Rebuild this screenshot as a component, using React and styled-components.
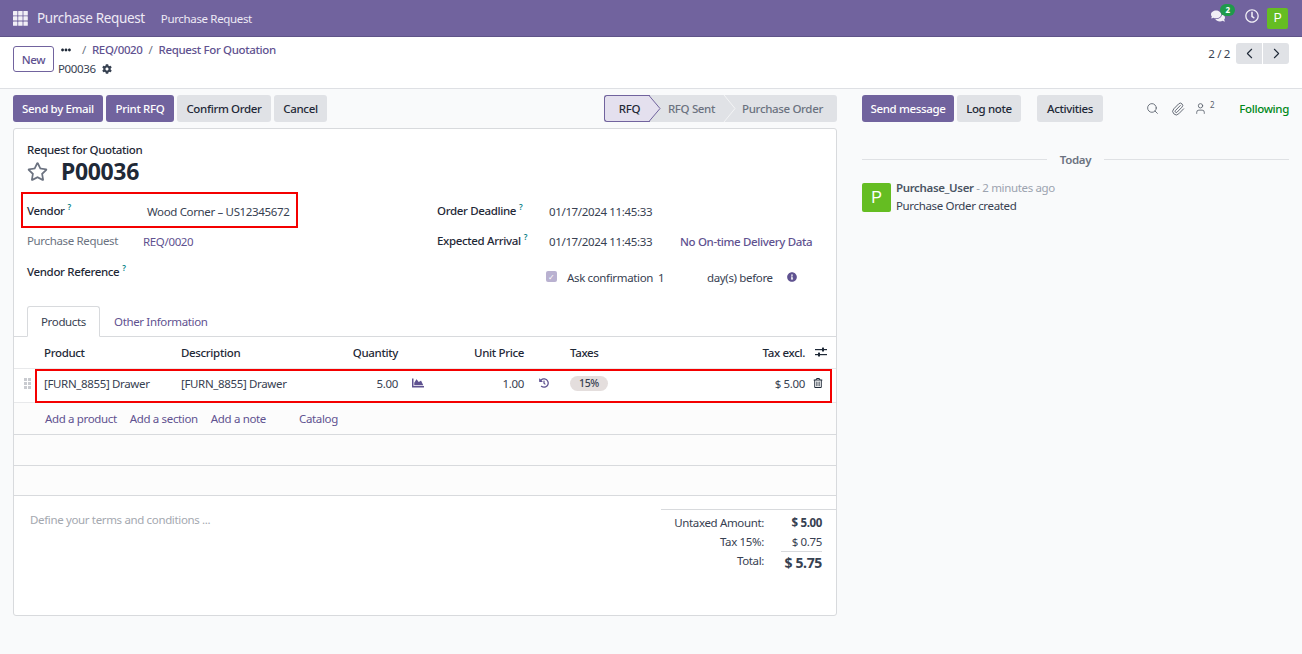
import React from "react";
import styled, { createGlobalStyle } from "styled-components";
import {
  FaChartArea,
  FaCog,
  FaComments,
  FaEllipsisH,
  FaHistory,
  FaInfoCircle,
  FaRegClock,
  FaRegStar,
  FaRegTrashAlt,
} from "react-icons/fa";
import { ChevronLeft, ChevronRight, Paperclip, Search, User } from "lucide-react";

const PURPLE = "#71639e";
const LINK = "#5f5290";
const TEXT = "#374151";
const DARK = "#1f2937";
const GREY = "#e0e2e6";
const LINE = "#d8dadd";

const GlobalStyle = createGlobalStyle`
  html, body {
    margin: 0;
    padding: 0;
    height: 100%;
    background: #f9fafb;
    overflow: hidden;
  }
  body {
    font-family: "Noto Sans", "Open Sans", sans-serif;
    font-size: 11.5px;
    letter-spacing: -0.35px;
    color: ${TEXT};
  }
  button { letter-spacing: inherit; }
  * { box-sizing: border-box; }
`;

const NavBar = styled.div`
  height: 37px;
  background: ${PURPLE};
  border-bottom: 1px solid #5f5488;
  display: flex;
  align-items: center;
  padding: 0 14px 0 13px;
  color: #fff;
`;

const AppsIcon = styled.svg`
  width: 15px;
  height: 15px;
  fill: #f1eff6;
  margin-right: 9px;
`;

const BrandName = styled.span`
  font-size: 13.5px;
  color: #eeeaf5;
  margin-right: 16px;
`;

const NavItem = styled.span`
  font-size: 11.5px;
  color: #eeeaf5;
`;

const NavRight = styled.div`
  margin-left: auto;
  display: flex;
  align-items: center;
`;

const NavIcon = styled.span`
  position: relative;
  display: flex;
  font-size: 14px;
  color: #f1eff6;
  margin: 0 ${(p) => p.$gap}px 4px 0;
`;

const CountBadge = styled.span`
  position: absolute;
  top: -5px;
  left: 9px;
  height: 12px;
  min-width: 15px;
  border-radius: 6px;
  background: #1f9a4b;
  color: #fff;
  font-size: 8px;
  font-weight: 700;
  line-height: 12px;
  text-align: center;
`;

const Avatar = styled.span`
  width: ${(p) => p.$size}px;
  height: ${(p) => p.$size}px;
  flex: none;
  background: #65bd22;
  color: #fff;
  border-radius: 2px;
  display: flex;
  align-items: center;
  justify-content: center;
  font-family: "Liberation Sans", sans-serif;
  font-size: ${(p) => p.$font}px;
`;

const ControlPanel = styled.div`
  height: 52px;
  background: #fff;
  border-bottom: 1px solid #dee0e4;
  display: flex;
  padding: 5px 13px 0;
`;

const NewButton = styled.button`
  width: 41px;
  height: 26px;
  margin-top: 4px;
  background: #fff;
  border: 1px solid ${PURPLE};
  border-radius: 3px;
  color: ${LINK};
  font: 500 11.5px "Noto Sans", sans-serif;
  padding: 0;
`;

const Crumbs = styled.div`
  margin-left: 4px;
  display: flex;
  flex-direction: column;
  gap: 4px;
`;

const CrumbRow = styled.div`
  height: 15px;
  display: flex;
  align-items: center;
  gap: 6px;
  font-size: 11.5px;
  font-weight: 500;
  color: ${LINK};
`;

const Dots = styled.span`
  display: flex;
  font-size: 10px;
  color: ${DARK};
  margin: 0 5px 0 3px;
`;

const Slash = styled.span`
  color: #6b7280;
  font-weight: 400;
`;

const RecordRow = styled.div`
  height: 15px;
  display: flex;
  align-items: center;
  gap: 6px;
  font-size: 11.5px;
  color: ${TEXT};

  svg {
    font-size: 10px;
    color: #374151;
    letter-spacing: 0;
  }
`;

const Pager = styled.div`
  margin-left: auto;
  display: flex;
  align-items: center;
  align-self: flex-start;
  gap: 6px;
  font-size: 11.5px;
  margin-top: 1px;
`;

const PagerButtons = styled.div`
  display: flex;
  gap: 1px;
`;

const PagerButton = styled.span`
  width: 26px;
  height: 21px;
  background: ${GREY};
  display: flex;
  align-items: center;
  justify-content: center;
  color: ${DARK};
  border-radius: ${(p) => (p.$left ? "3px 0 0 3px" : "0 3px 3px 0")};
`;

const Columns = styled.div`
  display: grid;
  grid-template-columns: 850px 1fr;
`;

const FormColumn = styled.div`
  padding: 6px 13px 0;
`;

const ActionBar = styled.div`
  display: flex;
  justify-content: space-between;
  margin-bottom: 6px;
`;

const ButtonRow = styled.div`
  display: flex;
  gap: 3px;
`;

const Button = styled.button`
  height: 27px;
  width: ${(p) => p.$width}px;
  padding: 0;
  border: 0;
  border-radius: 3px;
  background: ${(p) => (p.$primary ? PURPLE : GREY)};
  color: ${(p) => (p.$primary ? "#fff" : DARK)};
  font: 500 11.5px "Noto Sans", sans-serif;
  white-space: nowrap;
  margin-left: ${(p) => p.$offset || 0}px;
`;

const StatusBar = styled.div`
  display: flex;
  height: 27px;
  width: 233px;
  background: ${GREY};
  border-radius: 3px;
  position: relative;
`;

const Stage = styled.span`
  width: ${(p) => p.$width}px;
  display: flex;
  align-items: center;
  justify-content: center;
  font-weight: 500;
  color: #6b7280;
  font-size: 11.5px;
`;

const ActiveStage = styled(Stage)`
  color: ${DARK};
  background: #e4e0ee;
  border: 1px solid ${PURPLE};
  border-right: 0;
  border-radius: 3px 0 0 3px;
  padding-left: 4px;
`;

const StageArrow = styled.svg`
  position: absolute;
  top: 0;
  left: ${(p) => p.$left}px;
  width: 12px;
  height: 27px;
  overflow: visible;
`;

const Sheet = styled.div`
  height: 488px;
  background: #fff;
  border: 1px solid #d8dadd;
  border-radius: 3px;
  display: flex;
  flex-direction: column;
`;

const SheetHead = styled.div`
  padding: 13px 13px 0;
`;

const SubTitle = styled.div`
  font-size: 11.5px;
  font-weight: 500;
  color: ${DARK};
  line-height: 15px;
`;

const TitleRow = styled.div`
  display: flex;
  align-items: center;
  gap: 13px;
  height: 29px;
`;

const Star = styled(FaRegStar)`
  font-size: 21px;
  color: #6b7280;
`;

const Title = styled.h1`
  margin: 0;
  font-size: 23px;
  font-weight: 700;
  color: ${DARK};
  line-height: 29px;
`;

const FieldGrid = styled.div`
  display: grid;
  grid-template-columns: 410px 1fr;
  margin-top: 10px;
`;

const FieldColumn = styled.div`
  display: flex;
  flex-direction: column;
`;

const Field = styled.div`
  position: relative;
  height: ${(p) => p.$height || 30.5}px;
  display: flex;
  align-items: center;
  padding-top: ${(p) => p.$top || 0}px;
`;

const Label = styled.span`
  width: ${(p) => p.$width}px;
  flex: none;
  font-weight: ${(p) => (p.$muted ? 400 : 500)};
  color: ${(p) => (p.$muted ? "#6b7280" : DARK)};
  white-space: nowrap;
  margin-top: -2px;

  sup {
    font-size: 8px;
    color: #017e84;
    font-weight: 600;
    margin-left: 3px;
    line-height: 0;
  }
`;

const Value = styled.span`
  white-space: nowrap;
  flex: none;
  width: ${(p) => (p.$width ? `${p.$width}px` : "auto")};
  margin-left: ${(p) => p.$offset || 0}px;
`;

const LinkValue = styled(Value)`
  color: ${LINK};
  font-weight: ${(p) => (p.$strong ? 500 : 400)};
`;

const RedBox = styled.span`
  position: absolute;
  top: ${(p) => p.$top}px;
  bottom: ${(p) => p.$bottom}px;
  left: ${(p) => p.$left}px;
  right: ${(p) => (p.$right === undefined ? "auto" : `${p.$right}px`)};
  width: ${(p) => (p.$width ? `${p.$width}px` : "auto")};
  border: 2px solid #f40000;
  pointer-events: none;
`;

const CheckBox = styled.span`
  width: 11px;
  height: 11px;
  flex: none;
  border-radius: 2px;
  background: #b9b1d0;
  color: #fff;
  font-size: 8px;
  line-height: 11px;
  text-align: center;
  margin-left: 109px;
  margin-top: -2px;
`;

const InfoIcon = styled(FaInfoCircle)`
  font-size: 10px;
  color: ${LINK};
`;

const Tabs = styled.div`
  display: flex;
  margin-top: 18px;
  height: 31px;
  border-bottom: 1px solid ${LINE};
  padding-left: 13px;
`;

const Tab = styled.span`
  height: 31px;
  padding: 0 13px;
  display: flex;
  align-items: center;
  color: ${(p) => (p.$active ? TEXT : LINK)};
  background: ${(p) => (p.$active ? "#fff" : "transparent")};
  border: 1px solid ${(p) => (p.$active ? LINE : "transparent")};
  border-bottom-color: ${(p) => (p.$active ? "#fff" : "transparent")};
  border-radius: 3px 3px 0 0;
`;

const Table = styled.div`
  display: flex;
  flex-direction: column;
`;

const GRID = "30px 137px 150px 67px 30px 96px 46px 60px 175px 31px";

const HeadRow = styled.div`
  height: 32px;
  display: grid;
  grid-template-columns: ${GRID};
  align-items: center;
  font-weight: 500;
  color: ${DARK};
  border-bottom: 1px solid #e8e9eb;
`;

const ItemRow = styled(HeadRow)`
  height: 34px;
  padding-bottom: 4px;
  font-weight: 400;
  color: ${TEXT};
  position: relative;
`;

const Cell = styled.span`
  white-space: nowrap;
  text-align: ${(p) => (p.$right ? "right" : "left")};
  grid-column: ${(p) => p.$col};
`;

const IconCell = styled.span`
  grid-column: ${(p) => p.$col};
  display: flex;
  padding-left: ${(p) => p.$pad || 0}px;
  font-size: ${(p) => p.$size || 11}px;
  color: ${(p) => p.$color || LINK};
`;

const Grip = styled.svg`
  width: 7px;
  height: 11px;
  fill: #c9cbd0;
  margin-left: 10px;
`;

const SettingsIcon = styled.svg`
  width: 12px;
  height: 10px;
  fill: ${DARK};
`;

const TaxPill = styled.span`
  grid-column: 8;
  justify-self: start;
  width: 38px;
  height: 15px;
  border-radius: 8px;
  background: #e4dedd;
  color: #374151;
  font-size: 10.5px;
  font-weight: 500;
  line-height: 15px;
  text-align: center;
`;

const AddRow = styled.div`
  height: 32px;
  padding-left: 31px;
  display: flex;
  align-items: center;
  gap: 13px;
  color: ${LINK};
  background: #fcfcfc;
  border-bottom: 1px solid ${LINE};
`;

const Catalog = styled.span`
  margin-left: 20px;
`;

const BlankRow = styled.div`
  height: ${(p) => p.$height}px;
  border-bottom: 1px solid ${LINE};
  background: #fcfcfc;
`;

const Footer = styled.div`
  flex: 1;
  display: flex;
  justify-content: space-between;
  padding: 13px 0 0 16px;
`;

const Terms = styled.span`
  color: #a4a8af;
  margin-top: 3px;
`;

const Totals = styled.div`
  width: 175px;
  border-top: 1px solid ${LINE};
  padding: 3px 14px 0 0;
  display: grid;
  grid-template-columns: 103px 1fr;
  height: fit-content;
`;

const TotalLabel = styled.span`
  text-align: right;
  line-height: 19px;
  height: ${(p) => (p.$tall ? 22 : 19)}px;
`;

const TotalValue = styled.span`
  text-align: right;
  line-height: ${(p) => (p.$big ? 22 : 19)}px;
  font-size: ${(p) => (p.$big ? 14 : 11.5)}px;
  font-weight: ${(p) => (p.$bold ? 700 : 400)};
  border-top: ${(p) => (p.$big ? `1px solid ${LINE}` : "0")};
  margin-left: 17px;
`;

const Chatter = styled.div`
  padding: 6px 13px 0 12px;
`;

const ChatterBar = styled.div`
  display: flex;
  align-items: center;
  height: 27px;
`;

const ChatterTools = styled.div`
  margin-left: auto;
  display: flex;
  align-items: center;
  color: #4b5563;
  font-size: 11.5px;
`;

const ToolIcon = styled.span`
  display: flex;
  align-items: center;
  margin-right: ${(p) => p.$gap}px;
  color: #59606c;

  sup {
    font-size: 8px;
    line-height: 8px;
    margin: -7px 0 0 3px;
  }
`;

const Following = styled.span`
  color: #008818;
  font-weight: 500;
`;

const DateLine = styled.div`
  display: flex;
  align-items: center;
  gap: 13px;
  margin-top: 30px;
  font-weight: 600;
  color: #6b7280;

  &::before, &::after {
    content: "";
    flex: 1;
    height: 1px;
    background: #dfe1e4;
  }
`;

const Message = styled.div`
  display: flex;
  gap: 5px;
  margin-top: 16px;
`;

const MessageBody = styled.div`
  display: flex;
  flex-direction: column;
  gap: 3px;
  line-height: 15px;
  margin-top: -3px;
`;

const Author = styled.div`
  color: #9ca3af;
  font-size: 11.5px;

  b {
    color: #4b5563;
    font-weight: 600;
  }
`;

const App = () => {
  return (
    <>
      <GlobalStyle />
      <NavBar>
        <AppsIcon viewBox="0 0 15 15">
          {[0, 5.2, 10.4].flatMap((y) =>
            [0, 5.2, 10.4].map((x) => <rect key={x + "-" + y} x={x} y={y} width="4.4" height="4.4" rx="0.5" />)
          )}
        </AppsIcon>
        <BrandName>Purchase Request</BrandName>
        <NavItem>Purchase Request</NavItem>
        <NavRight>
          <NavIcon $gap={20}>
            <FaComments />
            <CountBadge>2</CountBadge>
          </NavIcon>
          <NavIcon $gap={8}>
            <FaRegClock />
          </NavIcon>
          <Avatar $size={21} $font={12}>P</Avatar>
        </NavRight>
      </NavBar>

      <ControlPanel>
        <NewButton>New</NewButton>
        <Crumbs>
          <CrumbRow>
            <Dots><FaEllipsisH /></Dots>
            <Slash>/</Slash>
            <span>REQ/0020</span>
            <Slash>/</Slash>
            <span>Request For Quotation</span>
          </CrumbRow>
          <RecordRow>
            P00036 <FaCog />
          </RecordRow>
        </Crumbs>
        <Pager>
          2 / 2
          <PagerButtons>
            <PagerButton $left><ChevronLeft size={17} strokeWidth={1.5} /></PagerButton>
            <PagerButton><ChevronRight size={17} strokeWidth={1.5} /></PagerButton>
          </PagerButtons>
        </Pager>
      </ControlPanel>

      <Columns>
        <FormColumn>
          <ActionBar>
            <ButtonRow>
              <Button $primary $width={90}>Send by Email</Button>
              <Button $primary $width={68}>Print RFQ</Button>
              <Button $width={94}>Confirm Order</Button>
              <Button $width={53}>Cancel</Button>
            </ButtonRow>
            <StatusBar>
              <ActiveStage $width={46}>RFQ</ActiveStage>
              <Stage $width={83}>RFQ Sent</Stage>
              <Stage $width={99}>Purchase Order</Stage>
              <StageArrow $left={45} viewBox="0 0 12 27">
                <path d="M0 0.5 L11 13.5 L0 26.5" fill="#e4e0ee" stroke={PURPLE} />
              </StageArrow>
              <StageArrow $left={119} viewBox="0 0 12 27">
                <path d="M1 0 L12 13.5 L1 27" fill="none" stroke="#f4f5f6" />
              </StageArrow>
            </StatusBar>
          </ActionBar>

          <Sheet>
            <SheetHead>
              <SubTitle>Request for Quotation</SubTitle>
              <TitleRow>
                <Star />
                <Title>P00036</Title>
              </TitleRow>
              <FieldGrid>
                <FieldColumn>
                  <Field>
                    <RedBox $top={-4} $bottom={-1} $left={-6} $width={277} />
                    <Label $width={120}>Vendor<sup>?</sup></Label>
                    <Value>Wood Corner – US12345672</Value>
                  </Field>
                  <Field>
                    <Label $width={116} $muted>Purchase Request</Label>
                    <LinkValue>REQ/0020</LinkValue>
                  </Field>
                  <Field>
                    <Label $width={120}>Vendor Reference<sup>?</sup></Label>
                  </Field>
                </FieldColumn>
                <FieldColumn>
                  <Field>
                    <Label $width={112}>Order Deadline<sup>?</sup></Label>
                    <Value>01/17/2024 11:45:33</Value>
                  </Field>
                  <Field>
                    <Label $width={112}>Expected Arrival<sup>?</sup></Label>
                    <Value $width={131}>01/17/2024 11:45:33</Value>
                    <LinkValue $strong>No On-time Delivery Data</LinkValue>
                  </Field>
                  <Field $top={10}>
                    <CheckBox>✓</CheckBox>
                    <Value $offset={10} $width={91}>Ask confirmation</Value>
                    <Value $width={49}>1</Value>
                    <Value $width={80}>day(s) before</Value>
                    <InfoIcon />
                  </Field>
                </FieldColumn>
              </FieldGrid>
            </SheetHead>

            <Tabs>
              <Tab $active>Products</Tab>
              <Tab>Other Information</Tab>
            </Tabs>

            <Table>
              <HeadRow>
                <Cell $col="2">Product</Cell>
                <Cell $col="3">Description</Cell>
                <Cell $col="4" $right>Quantity</Cell>
                <Cell $col="6" $right>Unit Price</Cell>
                <Cell $col="8">Taxes</Cell>
                <Cell $col="9" $right>Tax excl.</Cell>
                <IconCell $col="10" $pad={10}>
                  <SettingsIcon viewBox="0 0 12 10">
                    <rect x="0" y="2" width="12" height="1.2" />
                    <rect x="0" y="7" width="12" height="1.2" />
                    <rect x="7" y="0.5" width="2" height="4" rx="0.5" />
                    <rect x="3" y="5.5" width="2" height="4" rx="0.5" />
                  </SettingsIcon>
                </IconCell>
              </HeadRow>
              <ItemRow>
                <RedBox $top={0} $bottom={-1} $left={21} $right={4} />
                <Grip viewBox="0 0 7 11">
                  {[0, 4, 8].flatMap((y) =>
                    [0, 4].map((x) => <rect key={x + "-" + y} x={x} y={y} width="3" height="3" />)
                  )}
                </Grip>
                <Cell $col="2">[FURN_8855] Drawer</Cell>
                <Cell $col="3">[FURN_8855] Drawer</Cell>
                <Cell $col="4" $right>5.00</Cell>
                <IconCell $col="5" $pad={14} $size={12}><FaChartArea /></IconCell>
                <Cell $col="6" $right>1.00</Cell>
                <IconCell $col="7" $pad={15} $size={10}><FaHistory /></IconCell>
                <TaxPill>15%</TaxPill>
                <Cell $col="9" $right>$ 5.00</Cell>
                <IconCell $col="10" $pad={8} $size={10} $color={DARK}><FaRegTrashAlt /></IconCell>
              </ItemRow>
              <AddRow>
                <span>Add a product</span>
                <span>Add a section</span>
                <span>Add a note</span>
                <Catalog>Catalog</Catalog>
              </AddRow>
              <BlankRow $height={31} />
              <BlankRow $height={30} />
            </Table>

            <Footer>
              <Terms>Define your terms and conditions ...</Terms>
              <Totals>
                <TotalLabel>Untaxed Amount:</TotalLabel>
                <TotalValue $bold>$ 5.00</TotalValue>
                <TotalLabel>Tax 15%:</TotalLabel>
                <TotalValue>$ 0.75</TotalValue>
                <TotalLabel $tall>Total:</TotalLabel>
                <TotalValue $big $bold>$ 5.75</TotalValue>
              </Totals>
            </Footer>
          </Sheet>
        </FormColumn>

        <Chatter>
          <ChatterBar>
            <ButtonRow>
              <Button $primary $width={92}>Send message</Button>
              <Button $width={64}>Log note</Button>
              <Button $width={66} $offset={13}>Activities</Button>
            </ButtonRow>
            <ChatterTools>
              <ToolIcon $gap={12}><Search size={13} strokeWidth={1.6} /></ToolIcon>
              <ToolIcon $gap={9}><Paperclip size={14} strokeWidth={1.6} /></ToolIcon>
              <ToolIcon $gap={25}><User size={13} strokeWidth={1.6} /><sup>2</sup></ToolIcon>
              <Following>Following</Following>
            </ChatterTools>
          </ChatterBar>
          <DateLine>Today</DateLine>
          <Message>
            <Avatar $size={29} $font={16}>P</Avatar>
            <MessageBody>
              <Author><b>Purchase_User</b> - 2 minutes ago</Author>
              <div>Purchase Order created</div>
            </MessageBody>
          </Message>
        </Chatter>
      </Columns>
    </>
  );
};

export default App;
